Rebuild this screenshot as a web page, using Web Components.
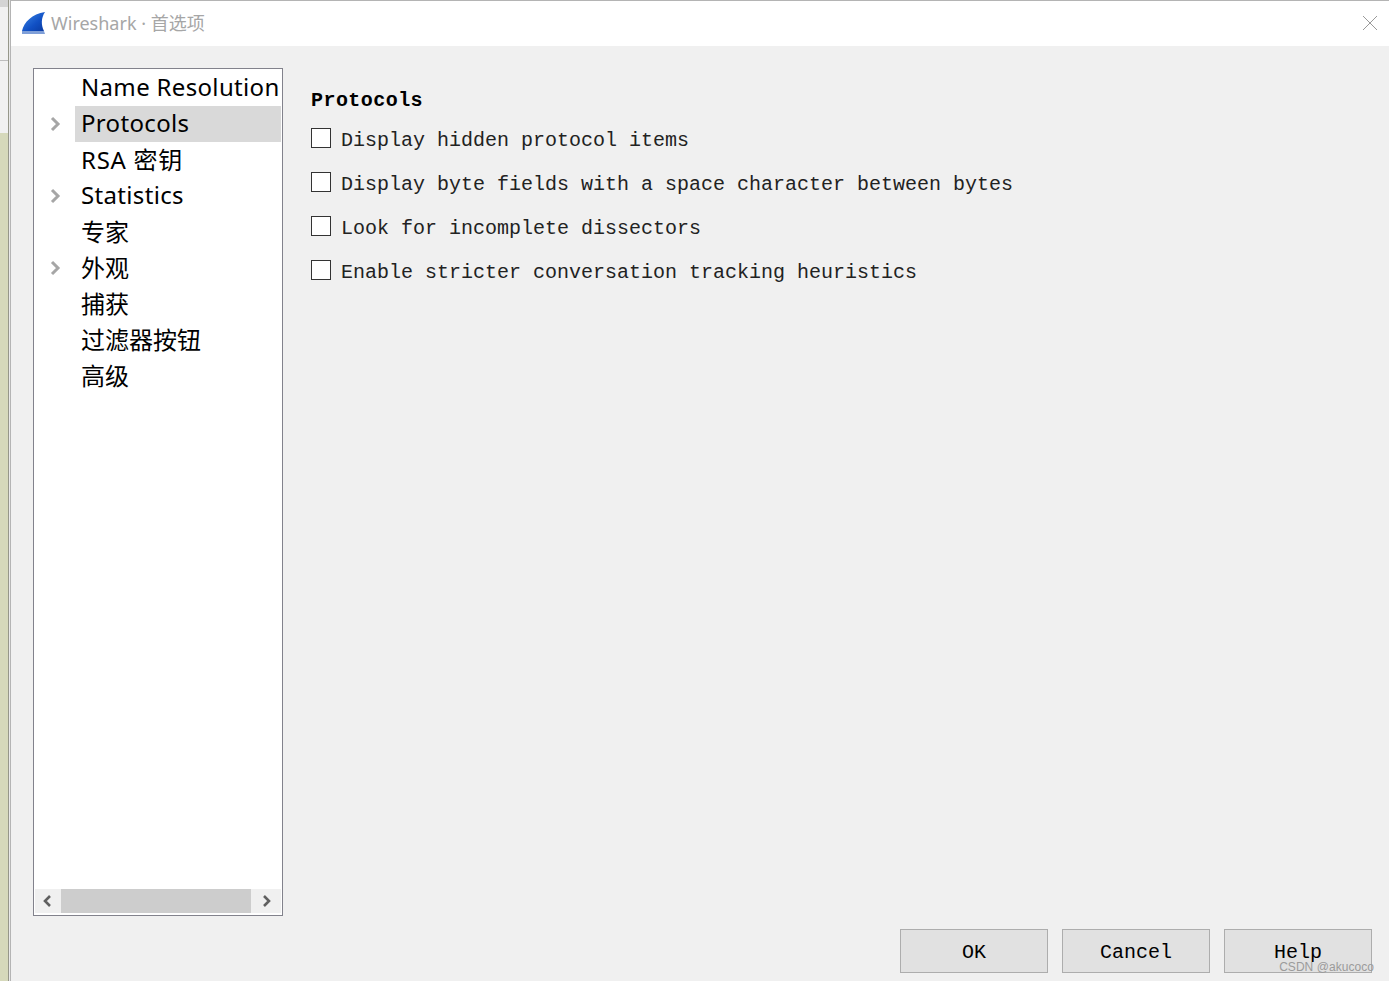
<!DOCTYPE html>
<html>

<head>
    <meta charset="utf-8">
    <title>Wireshark · 首选项</title>
    <style>
        html, body {
            margin: 0;
            height: 100%;
            overflow: hidden;
        }

        body {
            font-family: "Liberation Mono", monospace;
            background: #f0f0f0;
        }
    </style>
</head>

<body>
    <prefs-window>
        <prefs-tree slot="tree">
            <tree-row latin>Name Resolution</tree-row>
            <tree-row arrow selected latin>Protocols</tree-row>
            <tree-row style="letter-spacing: .7px">RSA 密钥</tree-row>
            <tree-row arrow latin>Statistics</tree-row>
            <tree-row>专家</tree-row>
            <tree-row arrow>外观</tree-row>
            <tree-row>捕获</tree-row>
            <tree-row>过滤器按钮</tree-row>
            <tree-row>高级</tree-row>
        </prefs-tree>
        <protocol-pane slot="pane">
            <check-row>Display hidden protocol items</check-row>
            <check-row>Display byte fields with a space character between bytes</check-row>
            <check-row>Look for incomplete dissectors</check-row>
            <check-row>Enable stricter conversation tracking heuristics</check-row>
        </protocol-pane>
        <dialog-button slot="buttons">OK</dialog-button>
        <dialog-button slot="buttons">Cancel</dialog-button>
        <dialog-button slot="buttons">Help</dialog-button>
    </prefs-window>
    <script>
        class PrefsWindow extends HTMLElement {
            constructor() {
                super();
                this.attachShadow({ mode: 'open' });
                this.shadowRoot.innerHTML = `
                    <style>
                        :host {
                            display: flex;
                            height: 981px;
                            background: #f0f0f0;
                        }
                        .strip {
                            width: 10px;
                            flex: none;
                            background:
                                linear-gradient(90deg, transparent 8px, #96978a 8px 9px, #e9e9e9 9px),
                                linear-gradient(#d4d4d4 0 7px, #f1f1f1 7px 60px, #bdbdbd 60px 61px, #f1f1f1 61px 133px, #d6d9bb 133px);
                        }
                        .win {
                            flex: 1;
                            display: flex;
                            flex-direction: column;
                            border-left: 1px solid #b4b4b4;
                            border-top: 1px solid #b4b4b4;
                        }
                        .title {
                            height: 45px;
                            box-sizing: border-box;
                            flex: none;
                            background: #fff;
                            display: flex;
                            align-items: center;
                            gap: 5px;
                            padding: 0 11px 2px 11px;
                            font: 18px "Noto Sans", "Noto Sans CJK SC", sans-serif;
                            color: #a6a6a6;
                        }
                        .title span { flex: 1; padding-bottom: 2px; }
                        .body {
                            flex: 1;
                            display: flex;
                            gap: 28px;
                            padding: 22px 17px 8px 22px;
                            min-height: 0;
                            position: relative;
                        }
                        .left { width: 250px; height: 848px; flex: none; }
                        .right { flex: 1; }
                        .buttons {
                            position: absolute;
                            right: 17px;
                            bottom: 8px;
                            display: flex;
                            gap: 14px;
                        }
                        .mark {
                            position: absolute;
                            right: 15px;
                            bottom: 7px;
                            font: 12px "Liberation Sans", sans-serif;
                            letter-spacing: .05px;
                            color: #9b9b9b;
                        }
                    </style>
                    <div class="strip"></div>
                    <div class="win">
                        <div class="title">
                            <svg width="24" height="24" viewBox="0 0 24 24">
                                <defs>
                                    <linearGradient id="fin" x1="0" y1="0" x2="1" y2="1">
                                        <stop offset="0" stop-color="#3f8ae8"/>
                                        <stop offset="0.6" stop-color="#1150c4"/>
                                        <stop offset="1" stop-color="#0a3aa0"/>
                                    </linearGradient>
                                </defs>
                                <path d="M0 20 C2 11 10 3 23 1 C19 7 19 14 22 20 Z" fill="url(#fin)"/>
                                <path d="M0 20 H22 L23 23 H0 Z" fill="#7f9fd8"/>
                            </svg>
                            <span>Wireshark · 首选项</span>
                            <svg width="16" height="16" viewBox="0 0 16 16">
                                <path d="M1 1 L15 15 M15 1 L1 15" stroke="#9a9a9a" stroke-width="1" fill="none"/>
                            </svg>
                        </div>
                        <div class="body">
                            <div class="left"><slot name="tree"></slot></div>
                            <div class="right"><slot name="pane"></slot></div>
                            <div class="buttons"><slot name="buttons"></slot></div>
                            <div class="mark">CSDN @akucoco</div>
                        </div>
                    </div>
                `;
            }
        }

        class PrefsTree extends HTMLElement {
            constructor() {
                super();
                this.attachShadow({ mode: 'open' });
                this.shadowRoot.innerHTML = `
                    <style>
                        :host {
                            display: flex;
                            flex-direction: column;
                            box-sizing: border-box;
                            height: 100%;
                            background: #fff;
                            border: 1px solid #82828c;
                            padding: 1px;
                        }
                        .rows { flex: 1; overflow: hidden; }
                        .bar {
                            height: 24px;
                            flex: none;
                            display: flex;
                            align-items: center;
                            background: #f0f0f0;
                            margin-bottom: 1px;
                        }
                        .btn { width: 26px; flex: none; display: flex; justify-content: center; padding-right: 2px; box-sizing: border-box; }
                        .btn.next { width: 30px; padding: 0 0 0 2px; }
                        .thumb { width: 190px; height: 24px; background: #cdcdcd; flex: none; }
                        .gap { flex: 1; }
                    </style>
                    <div class="rows"><slot></slot></div>
                    <div class="bar">
                        <div class="btn"><svg width="10" height="14" viewBox="0 0 10 14"><path d="M8 2 L3 7 L8 12" stroke="#606060" stroke-width="2.6" fill="none"/></svg></div>
                        <div class="thumb"></div>
                        <div class="gap"></div>
                        <div class="btn next"><svg width="10" height="14" viewBox="0 0 10 14"><path d="M2 2 L7 7 L2 12" stroke="#606060" stroke-width="2.6" fill="none"/></svg></div>
                    </div>
                `;
            }
        }

        class TreeRow extends HTMLElement {
            constructor() {
                super();
                this.attachShadow({ mode: 'open' });
                const arrow = this.hasAttribute('arrow');
                this.shadowRoot.innerHTML = `
                    <style>
                        :host {
                            display: flex;
                            height: 36px;
                            align-items: stretch;
                            font: 24px "Noto Sans", "Noto Sans CJK SC", sans-serif;
                            color: #000;
                        }
                        :host([latin]) { letter-spacing: .33px; }
                        .arrow { width: 40px; flex: none; display: flex; align-items: center; justify-content: center; box-sizing: border-box; }
                        .label {
                            flex: 1;
                            display: flex;
                            align-items: center;
                            padding: 0 0 4px 6px;
                            white-space: nowrap;
                            overflow: hidden;
                        }
                        :host([selected]) .label { background: #d9d9d9; }
                    </style>
                    <div class="arrow">${arrow ? '<svg width="12" height="16" viewBox="0 0 12 16"><path d="M3 2 L9 8 L3 14" stroke="#a6a6a6" stroke-width="3" fill="none"/></svg>' : ''}</div>
                    <div class="label"><slot></slot></div>
                `;
            }
        }

        class ProtocolPane extends HTMLElement {
            constructor() {
                super();
                this.attachShadow({ mode: 'open' });
                this.shadowRoot.innerHTML = `
                    <style>
                        :host { display: block; padding-top: 20px; }
                        h2 {
                            margin: 0 0 11px;
                            font: 700 20px/26px "Liberation Mono", monospace;
                            letter-spacing: 0.45px;
                            color: #000;
                        }
                        .list { display: flex; flex-direction: column; gap: 14px; }
                    </style>
                    <h2>Protocols</h2>
                    <div class="list"><slot></slot></div>
                `;
            }
        }

        class CheckRow extends HTMLElement {
            constructor() {
                super();
                this.attachShadow({ mode: 'open' });
                this.shadowRoot.innerHTML = `
                    <style>
                        :host {
                            display: flex;
                            align-items: center;
                            gap: 10px;
                            height: 30px;
                            font: 20px "Liberation Mono", monospace;
                            color: #222;
                            white-space: nowrap;
                        }
                        .box {
                            width: 20px;
                            height: 20px;
                            box-sizing: border-box;
                            border: 1px solid #333;
                            background: #fff;
                            flex: none;
                            margin-top: -4px;
                        }
                    </style>
                    <div class="box"></div>
                    <slot></slot>
                `;
            }
        }

        class DialogButton extends HTMLElement {
            constructor() {
                super();
                this.attachShadow({ mode: 'open' });
                this.shadowRoot.innerHTML = `
                    <style>
                        :host {
                            display: flex;
                            align-items: center;
                            justify-content: center;
                            box-sizing: border-box;
                            width: 148px;
                            height: 44px;
                            padding-top: 3px;
                            background: #e1e1e1;
                            border: 1px solid #adadad;
                            font: 20px "Liberation Mono", monospace;
                            color: #000;
                        }
                    </style>
                    <slot></slot>
                `;
            }
        }

        customElements.define('prefs-window', PrefsWindow);
        customElements.define('prefs-tree', PrefsTree);
        customElements.define('tree-row', TreeRow);
        customElements.define('protocol-pane', ProtocolPane);
        customElements.define('check-row', CheckRow);
        customElements.define('dialog-button', DialogButton);
    </script>
</body>

</html>
